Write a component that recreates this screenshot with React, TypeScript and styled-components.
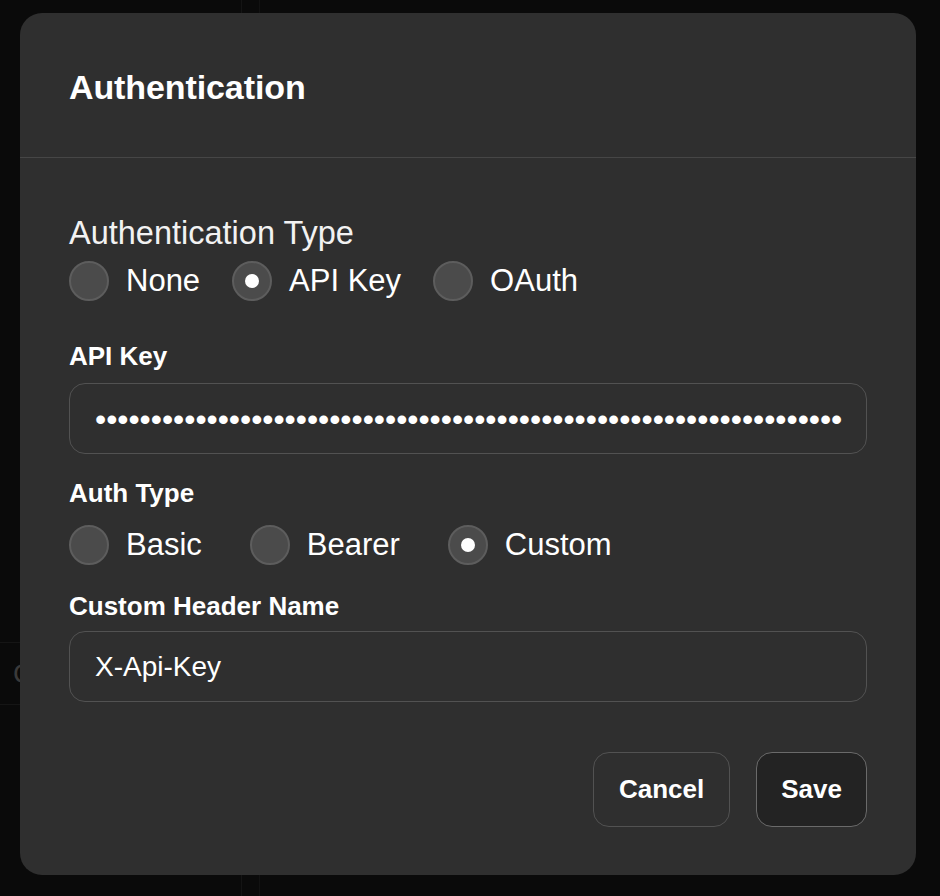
import React from "react";
import styled, { createGlobalStyle } from "styled-components";

const GlobalStyle = createGlobalStyle`
  html, body { margin: 0; padding: 0; }
  body {
    background: #0a0a0a;
    font-family: "Liberation Sans", Arial, sans-serif;
    color: #fff;
  }
  * { box-sizing: border-box; }
`;

const Backdrop = styled.div`
  display: grid;
  grid-template-columns: 242px 18px 1fr;
  height: 896px;
  background: #0a0a0a;
`;

const SideColumn = styled.div`
  border-right: 1px solid #141414;
  display: flex;
  flex-direction: column;
  padding-top: 642px;
`;

const SideRow = styled.div`
  height: 63px;
  border-top: 1px solid #151515;
  border-bottom: 1px solid #151515;
  padding-left: 13px;
  font-size: 28px;
  line-height: 61px;
  color: #3a3a3a;
`;

const Gutter = styled.div`
  border-right: 1px solid #121212;
`;

const Overlay = styled.div`
  position: fixed;
  inset: 0;
  display: flex;
  align-items: flex-start;
  padding: 13px 0 0 20px;
`;

const Dialog = styled.div`
  width: 896px;
  height: 862px;
  background: #2f2f2f;
  border-radius: 22px;
  display: flex;
  flex-direction: column;
`;

const Header = styled.div`
  height: 145px;
  flex-shrink: 0;
  display: flex;
  align-items: center;
  padding: 4px 49px 0;
  border-bottom: 1.5px solid #464646;
`;

const Title = styled.h2`
  margin: 0;
  font-size: 34px;
  line-height: 40px;
  font-weight: 700;
  color: #fff;
  letter-spacing: -0.1px;
`;

const Body = styled.div`
  display: flex;
  flex-direction: column;
  padding: 55px 49px 48px 49px;
  flex: 1;
`;

const GroupLabel = styled.div`
  font-size: 32.5px;
  line-height: 40px;
  font-weight: 400;
  color: #f2f2f2;
`;

const FieldLabel = styled.div<{ $mt: number }>`
  margin-top: ${(p) => p.$mt}px;
  font-size: 26px;
  line-height: 32px;
  font-weight: 700;
  color: #fff;
`;

const RadioRow = styled.div<{ $gap: number; $mt: number }>`
  display: flex;
  align-items: center;
  gap: ${(p) => p.$gap}px;
  margin-top: ${(p) => p.$mt}px;
  height: 40px;
`;

const RadioItem = styled.label`
  display: flex;
  align-items: center;
  gap: 17px;
  font-size: 31px;
  line-height: 40px;
  color: #fff;
  cursor: pointer;
`;

const RadioCircle = styled.span<{ $checked?: boolean }>`
  width: 40px;
  height: 40px;
  border-radius: 50%;
  background: #4b4b4b;
  border: 2px solid #5d5d5d;
  display: flex;
  align-items: center;
  justify-content: center;
  flex-shrink: 0;
  &::after {
    content: "";
    display: ${(p) => (p.$checked ? "block" : "none")};
    width: 14px;
    height: 14px;
    border-radius: 50%;
    background: #fff;
  }
`;

const InputBox = styled.div<{ $mt: number }>`
  margin-top: ${(p) => p.$mt}px;
  height: 71px;
  border: 1.5px solid #525252;
  border-radius: 16px;
  display: flex;
  align-items: center;
  padding: 0 25px;
  overflow: hidden;
`;

const MaskedText = styled.span`
  font-size: 32px;
  line-height: 40px;
  color: #fff;
  white-space: nowrap;
  letter-spacing: -0.05px;
`;

const InputText = styled.span`
  font-size: 28px;
  line-height: 40px;
  color: #fff;
`;

const Footer = styled.div`
  margin-top: 50px;
  display: flex;
  justify-content: flex-end;
  gap: 26px;
`;

const Button = styled.button<{ $primary?: boolean }>`
  height: 75px;
  padding: 0 ${(p) => (p.$primary ? 24 : 25)}px;
  border-radius: 16px;
  font-family: "Liberation Sans", Arial, sans-serif;
  font-size: 26px;
  font-weight: 700;
  color: #fff;
  background: ${(p) => (p.$primary ? "#232323" : "#2f2f2f")};
  border: 1.5px solid ${(p) => (p.$primary ? "#6a6a6a" : "#525252")};
  cursor: pointer;
`;

type Opt = { label: string; checked?: boolean };

const Radios = ({ options, gap, mt }: { options: Opt[]; gap: number; mt: number }) => (
  <RadioRow $gap={gap} $mt={mt} role="radiogroup">
    {options.map((o) => (
      <RadioItem key={o.label}>
        <RadioCircle $checked={o.checked} />
        {o.label}
      </RadioItem>
    ))}
  </RadioRow>
);

export default function App() {
  return (
    <>
      <GlobalStyle />
      <Backdrop>
        <SideColumn>
          <SideRow>C</SideRow>
        </SideColumn>
        <Gutter />
        <div />
      </Backdrop>
      <Overlay>
        <Dialog role="dialog">
          <Header>
            <Title>Authentication</Title>
          </Header>
          <Body>
            <GroupLabel>Authentication Type</GroupLabel>
            <Radios
              gap={32}
              mt={8}
              options={[{ label: "None" }, { label: "API Key", checked: true }, { label: "OAuth" }]}
            />
            <FieldLabel $mt={39}>API Key</FieldLabel>
            <InputBox $mt={11}>
              <MaskedText>{"•".repeat(67)}</MaskedText>
            </InputBox>
            <FieldLabel $mt={23}>Auth Type</FieldLabel>
            <Radios
              gap={48}
              mt={16}
              options={[{ label: "Basic" }, { label: "Bearer" }, { label: "Custom", checked: true }]}
            />
            <FieldLabel $mt={25}>Custom Header Name</FieldLabel>
            <InputBox $mt={9}>
              <InputText>X-Api-Key</InputText>
            </InputBox>
            <Footer>
              <Button>Cancel</Button>
              <Button $primary>Save</Button>
            </Footer>
          </Body>
        </Dialog>
      </Overlay>
    </>
  );
}
